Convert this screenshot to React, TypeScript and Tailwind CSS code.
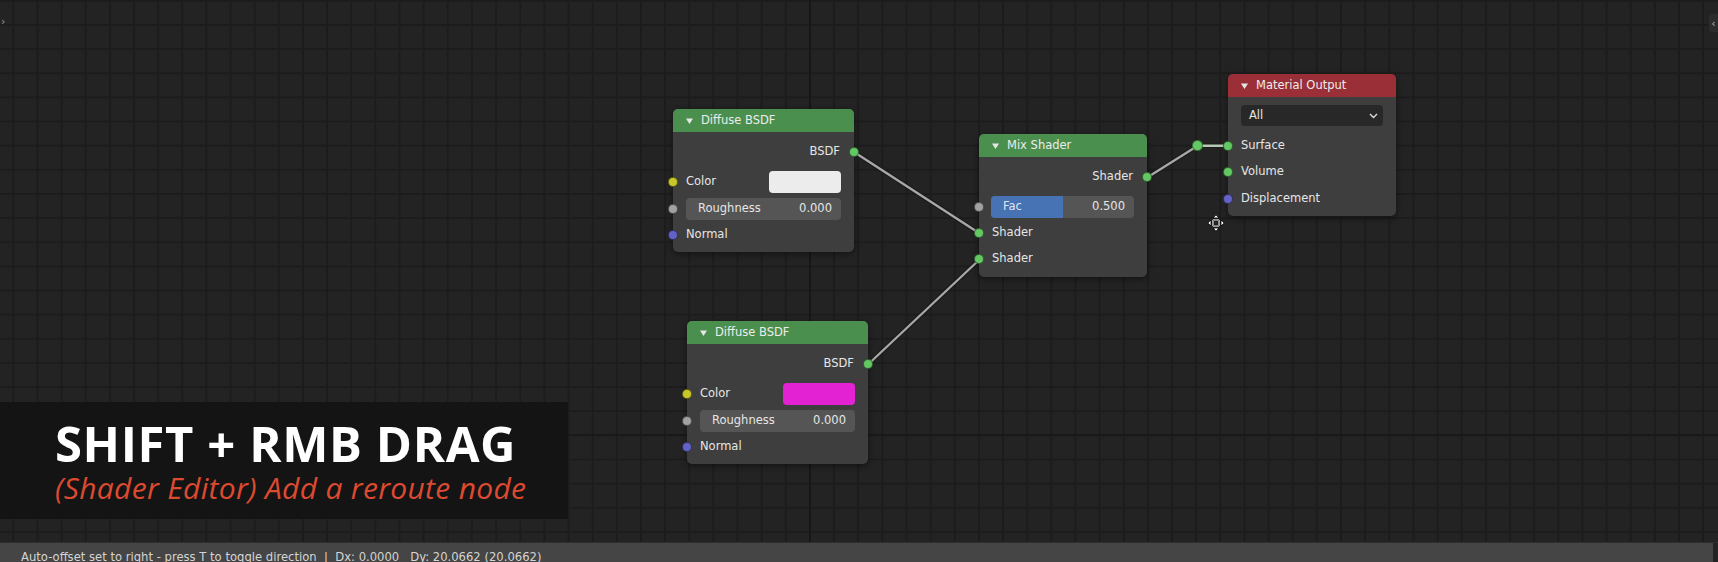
import { type ReactNode } from "react";

type SocketKind = "yellow" | "gray" | "purple" | "green";

const socketClass: Record<SocketKind, string> = {
  yellow: "bg-[#c7c729]",
  gray: "bg-[#a1a1a1]",
  purple: "bg-[#6363c7]",
  green: "bg-[#63c763]",
};

function Socket({ kind, side }: { kind: SocketKind; side: "left" | "right" }) {
  return (
    <span
      className={`absolute top-1/2 size-[10px] -translate-y-1/2 rounded-full border border-black/50 ${socketClass[kind]} ${
        side === "left" ? "left-[-5px]" : "right-[-5px]"
      }`}
    />
  );
}

function Node({
  title,
  left,
  top,
  width,
  header,
  children,
}: {
  title: string;
  left: string;
  top: string;
  width: string;
  header: "green" | "red";
  children: ReactNode;
}) {
  return (
    <div
      className={`absolute ${left} ${top} ${width} rounded-[5px] bg-[#3e3e3e] shadow-[0_2px_6px_rgba(0,0,0,0.45)]`}
    >
      <div
        className={`flex h-[23px] items-center gap-[8px] rounded-t-[5px] pl-[13px] text-[11.5px] text-[#ececec] ${
          header === "green" ? "bg-[#4b8f4e]" : "bg-[#9b2f38]"
        }`}
      >
        <svg width="7" height="6" viewBox="0 0 7 6" className="shrink-0">
          <path d="M0 0.5 L7 0.5 L3.5 6 Z" fill="#e6e6e6" />
        </svg>
        <span>{title}</span>
      </div>
      {children}
    </div>
  );
}

function OutputRow({ label, className = "h-[24px]" }: { label: string; className?: string }) {
  return (
    <div className={`relative flex items-center justify-end pr-[14px] ${className}`}>
      <span>{label}</span>
      <Socket kind="green" side="right" />
    </div>
  );
}

function InputRow({
  label,
  kind,
  className = "h-[26px]",
}: {
  label: string;
  kind: SocketKind;
  className?: string;
}) {
  return (
    <div className={`relative flex items-center pl-[13px] ${className}`}>
      <span>{label}</span>
      <Socket kind={kind} side="left" />
    </div>
  );
}

function DiffuseBody({ swatch }: { swatch: string }) {
  return (
    <div className="pt-[8px] pb-[4px]">
      <OutputRow label="BSDF" />
      <div className="relative mt-[6px] flex h-[24px] items-center justify-between px-[13px]">
        <span>Color</span>
        <span className={`h-[22px] w-[72px] rounded-[4px] ${swatch}`} />
        <Socket kind="yellow" side="left" />
      </div>
      <div className="relative mt-[2px] flex h-[26px] items-center px-[13px]">
        <div className="flex h-[22px] w-full items-center justify-between rounded-[4px] bg-[#555555] pr-[9px] pl-[12px]">
          <span>Roughness</span>
          <span>0.000</span>
        </div>
        <Socket kind="gray" side="left" />
      </div>
      <InputRow label="Normal" kind="purple" />
    </div>
  );
}

function MoveCursor() {
  return (
    <svg
      width="18"
      height="18"
      viewBox="0 0 18 18"
      className="absolute left-[1207px] top-[214px]"
    >
      <g fill="#ffffff" stroke="#000000" strokeWidth="0.8">
        <path d="M9 0.8 L12 4 L6 4 Z" />
        <path d="M9 17.2 L12 14 L6 14 Z" />
        <path d="M0.8 9 L4 6 L4 12 Z" />
        <path d="M17.2 9 L14 6 L14 12 Z" />
        <rect x="5.8" y="5.8" width="6.4" height="6.4" rx="2.4" fill="none" stroke="#ffffff" strokeWidth="1.6" />
      </g>
      <rect x="5.8" y="5.8" width="6.4" height="6.4" rx="2.4" fill="none" stroke="#000000" strokeWidth="0.6" />
    </svg>
  );
}

export default function App() {
  return (
    <div className="flex h-[562px] w-[1718px] flex-col overflow-hidden bg-[#232323] font-['DejaVu_Sans',sans-serif] text-[11.5px] text-[#e6e6e6]">
      <div className="relative min-h-0 flex-1 bg-[linear-gradient(to_right,transparent_809px,#171717_809px,#171717_811px,transparent_811px),linear-gradient(to_bottom,transparent_434px,#191919_434px,#191919_436px,transparent_436px),linear-gradient(to_right,#1c1c1c_2px,transparent_2px),linear-gradient(to_bottom,#1c1c1c_2px,transparent_2px)] bg-[size:100%_100%,100%_100%,24.15px_24.15px,24.15px_24.15px] bg-[position:0_0,0_0,12.3px_0,0_24px]">
        {/* side panel toggles */}
        <span className="absolute left-[1px] top-[16px] text-[11px] leading-none text-[#9a9a9a]">›</span>
        <span className="absolute right-0 top-[14px] flex h-[18px] w-[9px] items-center justify-center rounded-l-[3px] bg-[#2c2c2c] text-[11px] leading-none text-[#b0b0b0]">
          ‹
        </span>

        <svg width="1718" height="542" className="absolute inset-0">
          <g fill="none" strokeLinecap="round">
            <g stroke="#1a1a1a" strokeWidth="4.5">
              <path d="M854 152 L979 233" />
              <path d="M868.5 364 L979 260" />
              <path d="M1148 177 L1197.7 145.7" />
              <path d="M1197.7 145.7 L1228.3 145.7" />
            </g>
            <g stroke="#a7a7a7" strokeWidth="2.4">
              <path d="M854 152 L979 233" />
              <path d="M868.5 364 L979 260" />
              <path d="M1148 177 L1197.7 145.7" />
            </g>
            <path d="M1197.7 145.7 L1228.3 145.7" stroke="#b4c8b4" strokeWidth="2.4" />
          </g>
        </svg>

        <Node title="Diffuse BSDF" left="left-[673px]" top="top-[109px]" width="w-[181px]" header="green">
          <DiffuseBody swatch="bg-[#ececec]" />
        </Node>

        <Node title="Diffuse BSDF" left="left-[687px]" top="top-[321px]" width="w-[181px]" header="green">
          <DiffuseBody swatch="bg-[#e322d4]" />
        </Node>

        <Node title="Mix Shader" left="left-[979px]" top="top-[134px]" width="w-[168px]" header="green">
          <div className="pt-[8px] pb-[5px]">
            <OutputRow label="Shader" className="h-[24px] pr-[13px]" />
            <div className="relative mt-[5px] flex h-[25px] items-center pr-[13px] pl-[12px]">
              <div className="flex h-[22px] w-full overflow-hidden rounded-[4px] bg-[#555555]">
                <div className="flex w-1/2 items-center bg-[#4772b3] pl-[12px] text-[#dfe6f2]">Fac</div>
                <div className="flex w-1/2 items-center justify-end pr-[9px]">0.500</div>
              </div>
              <Socket kind="gray" side="left" />
            </div>
            <InputRow label="Shader" kind="green" className="mt-[1px] h-[26px]" />
            <InputRow label="Shader" kind="green" className="h-[26px]" />
          </div>
        </Node>

        <Node title="Material Output" left="left-[1228px]" top="top-[74px]" width="w-[168px]" header="red">
          <div className="pt-[8px] pb-[4px]">
            <div className="flex h-[22px] items-start pr-[13px] pl-[13px]">
              <div className="flex h-[21px] w-full items-center justify-between rounded-[4px] bg-[#282828] pr-[5px] pl-[8px]">
                <span>All</span>
                <svg width="9" height="6" viewBox="0 0 9 6">
                  <path d="M1 1 L4.5 4.5 L8 1" fill="none" stroke="#dcdcdc" strokeWidth="1.4" />
                </svg>
              </div>
            </div>
            <InputRow label="Surface" kind="green" className="mt-[5px] h-[27px]" />
            <InputRow label="Volume" kind="green" className="h-[26px]" />
            <InputRow label="Displacement" kind="purple" className="h-[27px]" />
          </div>
        </Node>

        {/* reroute node */}
        <span className="absolute left-[1192px] top-[140px] size-[11px] rounded-full border border-black/40 bg-[#63c763]" />

        <MoveCursor />

        {/* shortcut caption */}
        <div className="absolute left-0 top-[402px] h-[117px] w-[568px] bg-[#141414]/95 pt-[17px] pl-[55px] font-['Open_Sans',sans-serif]">
          <div className="text-[49px] leading-[48px] font-bold tracking-[0.6px] text-white">SHIFT + RMB DRAG</div>
          <div className="mt-[3px] text-[30px] leading-[36px] tracking-[0.3px] italic text-[#dc4a30]">
            (Shader Editor) Add a reroute node
          </div>
        </div>
      </div>

      <div className="flex h-[20px] shrink-0 border-t border-[#2e2e2e] bg-[#454545]">
        <div className="flex-1 overflow-hidden pt-[8px] pl-[21px] text-[11.6px] leading-[13px] whitespace-pre text-[#d4d4d4]">
          {"Auto-offset set to right - press T to toggle direction  |  Dx: 0.0000   Dy: 20.0662 (20.0662)"}
        </div>
        <div className="w-[5px] bg-[#232323]" />
      </div>
    </div>
  );
}
